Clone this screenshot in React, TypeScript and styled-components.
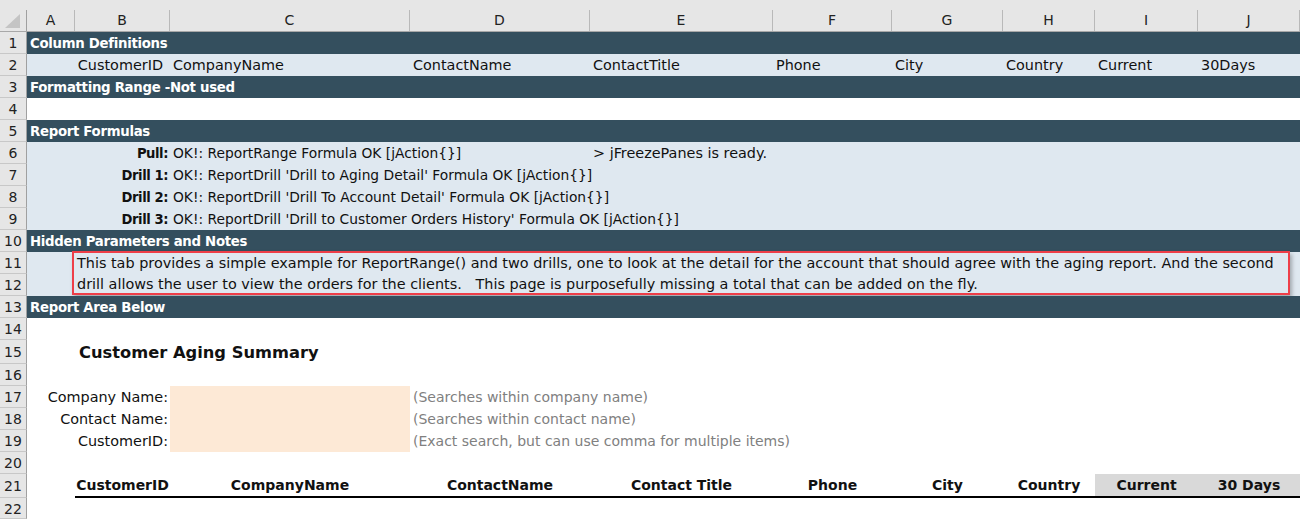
import React from "react";
import styled, { createGlobalStyle } from "styled-components";

const COLS = "27px 48px 95px 240px 180px 183px 119px 111px 92px 103px 102px";
const FONT = '"DejaVu Sans", "Liberation Sans", sans-serif';

const C = {
  band: "#344f5e",
  light: "#dfe8f0",
  head: "#e6e6e6",
  headLine: "#b9b9b9",
  rowLine: "#c8c8c8",
  orange: "#fde9d6",
  gray: "#d9d9d9",
  hint: "#808080",
  red: "#ee3e48",
};

const GlobalStyle = createGlobalStyle`
  html, body { margin: 0; padding: 0; background: #fff; }
  body { font-family: ${FONT}; font-size: 14.4px; color: #111; overflow: hidden; }
  * { box-sizing: border-box; }
`;

const Sheet = styled.div`
  width: 1300px;
  height: 519px;
  overflow: hidden;
  display: flex;
  flex-direction: column;
`;

const HeaderRow = styled.div`
  display: grid;
  grid-template-columns: ${COLS};
  height: 32px;
  flex: none;
  background: ${C.head};
  border-bottom: 1px solid #a8a8a8;
  padding-top: 10px;
`;

const Corner = styled.div`
  border-right: 1px solid #a0a0a0;
  display: flex;
  align-items: flex-start;
  justify-content: center;
  padding-top: 4px;
  padding-right: 2px;
`;

const ColHead = styled.div`
  border-right: 1px solid ${C.headLine};
  display: flex;
  align-items: center;
  justify-content: center;
  font-size: 14px;
  color: #222;
  line-height: 1;
  padding-bottom: 1px;
`;

type Tone = "band" | "light" | "plain";

const Row = styled.div<{ $h?: number; $tone?: Tone }>`
  display: grid;
  grid-template-columns: ${COLS};
  height: ${(p) => p.$h ?? 22}px;
  flex: none;
  background: ${(p) =>
    p.$tone === "band" ? C.band : p.$tone === "light" ? C.light : "#fff"};
`;

const RowNum = styled.div`
  background: ${C.head};
  border-right: 1px solid #a0a0a0;
  border-bottom: 1px solid ${C.rowLine};
  display: flex;
  align-items: center;
  justify-content: center;
  font-size: 14px;
  color: #222;
  padding-top: 1px;
`;

const Cell = styled.div<{
  $from?: number;
  $to?: number;
  $align?: "left" | "right" | "center";
  $bold?: boolean;
  $size?: number;
  $tight?: number;
  $bg?: string;
  $color?: string;
  $pr?: number;
  $underline?: boolean;
}>`
  grid-column: ${(p) => (p.$from ? `${p.$from} / ${p.$to ?? p.$from + 1}` : "auto")};
  display: flex;
  align-items: center;
  justify-content: ${(p) =>
    p.$align === "right" ? "flex-end" : p.$align === "center" ? "center" : "flex-start"};
  padding: 0 ${(p) => p.$pr ?? 3}px 0 3px;
  white-space: nowrap;
  overflow: visible;
  font-weight: ${(p) => (p.$bold ? 700 : 400)};
  font-size: ${(p) => (p.$size ? `${p.$size}px` : "inherit")};
  letter-spacing: ${(p) => (p.$tight ? `-${p.$tight}px` : "normal")};
  background: ${(p) => p.$bg ?? "transparent"};
  color: ${(p) => p.$color ?? "inherit"};
  border-bottom: ${(p) => (p.$underline ? "2px solid #000" : "0")};
  min-width: 0;
`;

const BandTitle = styled.div`
  grid-column: 2 / -1;
  display: flex;
  align-items: center;
  padding-left: 3px;
  color: #fff;
  font-weight: 700;
  font-size: 13.3px;
  letter-spacing: -0.3px;
  white-space: nowrap;
`;

const Title = styled(Cell)`
  font-size: 16.3px;
  padding-left: 4px;
  padding-top: 1px;
`;

const NoteRows = styled.div`
  display: grid;
  grid-template-columns: 27px 1fr;
  grid-template-rows: 22px 22px;
  height: 44px;
  flex: none;
`;

const NoteArea = styled.div`
  grid-column: 2;
  grid-row: 1 / 3;
  background: ${C.light};
  padding: 0 10px 0 45px;
`;

const NoteBox = styled.div`
  margin-top: -1px;
  height: 44px;
  border: 2px solid ${C.red};
  box-shadow: 2px 3px 4px rgba(0, 0, 0, 0.28);
  background: ${C.light};
  padding: 0 2px 0 3px;
  line-height: 21px;
  white-space: nowrap;
  overflow: hidden;
`;

const NoteLine = styled.div`
  height: 21px;
`;

const colLetters = ["A", "B", "C", "D", "E", "F", "G", "H", "I", "J"];

const defs = [
  "CompanyName",
  "ContactName",
  "ContactTitle",
  "Phone",
  "City",
  "Country",
  "Current",
  "30Days",
];

const formulas: [string, string][] = [
  ["Pull:", "OK!: ReportRange Formula OK [jAction{}]"],
  ["Drill 1:", "OK!: ReportDrill 'Drill to Aging Detail' Formula OK [jAction{}]"],
  ["Drill 2:", "OK!: ReportDrill 'Drill To Account Detail' Formula OK [jAction{}]"],
  ["Drill 3:", "OK!: ReportDrill 'Drill to Customer Orders History' Formula OK [jAction{}]"],
];

const filters: [string, string][] = [
  ["Company Name:", "(Searches within company name)"],
  ["Contact Name:", "(Searches within contact name)"],
  ["CustomerID:", "(Exact search, but can use comma for multiple items)"],
];

const reportCols = [
  "CustomerID",
  "CompanyName",
  "ContactName",
  "Contact Title",
  "Phone",
  "City",
  "Country",
  "Current",
  "30 Days",
];

const Band = ({ n, title }: { n: number; title: string }) => (
  <Row $tone="band">
    <RowNum>{n}</RowNum>
    <BandTitle>{title}</BandTitle>
  </Row>
);

const Blank = ({ n, h }: { n: number; h?: number }) => (
  <Row $h={h}>
    <RowNum>{n}</RowNum>
  </Row>
);

export default function App() {
  return (
    <>
      <GlobalStyle />
      <Sheet>
        <HeaderRow>
          <Corner>
            <svg width="15" height="14" viewBox="0 0 15 14">
              <polygon points="15,0 15,14 0,14" fill="#c4c4c4" />
            </svg>
          </Corner>
          {colLetters.map((l) => (
            <ColHead key={l}>{l}</ColHead>
          ))}
        </HeaderRow>

        <Band n={1} title="Column Definitions" />
        <Row $tone="light">
          <RowNum>2</RowNum>
          <Cell $from={3} $align="right" $pr={7}>
            CustomerID
          </Cell>
          {defs.map((d) => (
            <Cell key={d}>{d}</Cell>
          ))}
        </Row>
        <Band n={3} title="Formatting Range -Not used" />
        <Blank n={4} />
        <Band n={5} title="Report Formulas" />
        {formulas.map(([label, text], i) => (
          <Row $tone="light" key={label}>
            <RowNum>{6 + i}</RowNum>
            <Cell $from={2} $to={4} $align="right" $bold $size={13.2} $tight={0.45} $pr={2}>
              {label}
            </Cell>
            <Cell $from={4} $to={i === 0 ? 6 : 12} $size={13.8}>
              {text}
            </Cell>
            {i === 0 && <Cell $from={6} $to={12}>&gt; jFreezePanes is ready.</Cell>}
          </Row>
        ))}
        <Band n={10} title="Hidden Parameters and Notes" />
        <NoteRows>
          <RowNum>11</RowNum>
          <RowNum>12</RowNum>
          <NoteArea>
            <NoteBox>
              <NoteLine>
                This tab provides a simple example for ReportRange() and two drills, one to look at the detail for the account that should agree with the aging report. And the second
              </NoteLine>
              <NoteLine>
                drill allows the user to view the orders for the clients.&nbsp;&nbsp; This page is purposefully missing a total that can be added on the fly.
              </NoteLine>
            </NoteBox>
          </NoteArea>
        </NoteRows>
        <Band n={13} title="Report Area Below" />
        <Blank n={14} />
        <Row $h={24}>
          <RowNum>15</RowNum>
          <Title $from={3} $to={12} $bold>
            Customer Aging Summary
          </Title>
        </Row>
        <Blank n={16} />
        {filters.map(([label, hint], i) => (
          <Row key={label}>
            <RowNum>{17 + i}</RowNum>
            <Cell $from={2} $to={4} $align="right" $pr={2}>
              {label}
            </Cell>
            <Cell $from={4} $bg={C.orange} />
            <Cell $from={5} $to={12} $color={C.hint} $size={14}>
              {hint}
            </Cell>
          </Row>
        ))}
        <Blank n={20} />
        <Row $h={24}>
          <RowNum>21</RowNum>
          {reportCols.map((h, i) => (
            <Cell
              key={h}
              $from={3 + i}
              $align="center"
              $bold
              $size={14}
              $underline
              $bg={i >= 7 ? C.gray : undefined}
            >
              {h}
            </Cell>
          ))}
        </Row>
        <Row $h={21}>
          <RowNum>22</RowNum>
        </Row>
      </Sheet>
    </>
  );
}
